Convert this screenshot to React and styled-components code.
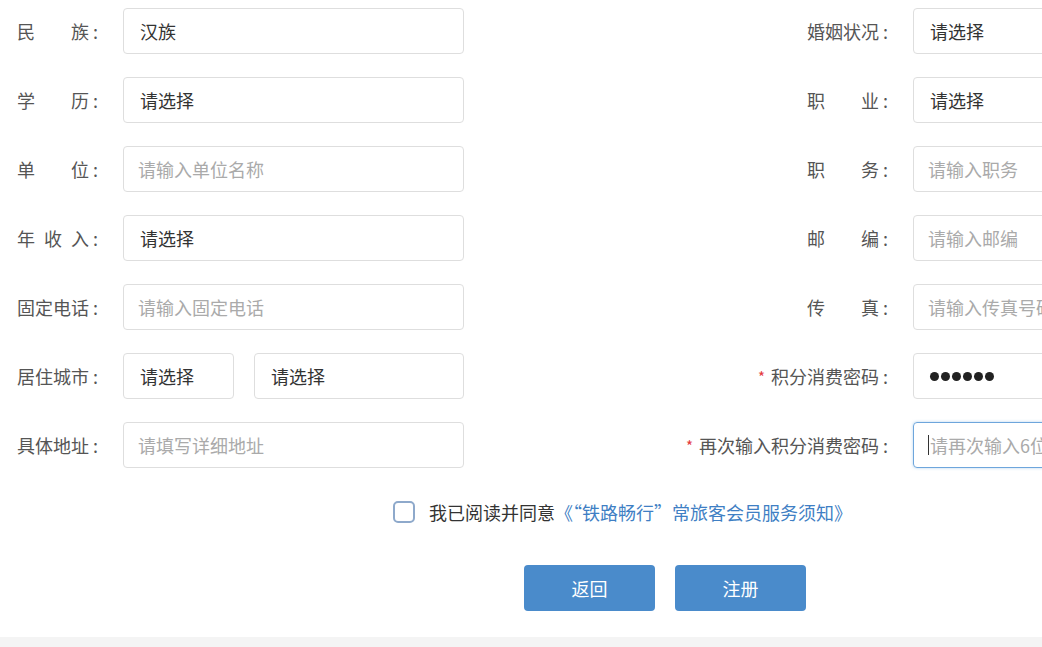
import React from 'react';
import styled, { createGlobalStyle } from 'styled-components';

const Global = createGlobalStyle`
  html, body {
    margin: 0;
    padding: 0;
    background: #fff;
    overflow: hidden;
  }
  body {
    font-family: "Noto Sans CJK SC", "Noto Sans", "Liberation Sans", sans-serif;
  }
`;

const Page = styled.div`
  width: 1254px;
  padding-top: 8px;
  display: flex;
  flex-direction: column;
`;

const Form = styled.div`
  display: flex;
  flex-direction: column;
  gap: 23px;
  padding-left: 17px;
`;

const Row = styled.div`
  display: flex;
  justify-content: space-between;
`;

const Field = styled.div`
  display: flex;
  align-items: center;
  gap: ${p => (p.$right ? '23px' : '25px')};
`;

const Label = styled.div`
  width: ${p => (p.$right ? '210px' : '81px')};
  display: flex;
  justify-content: ${p => (p.$right ? 'flex-end' : 'flex-start')};
  align-items: center;
  font-size: 18px;
  color: #555;
  white-space: nowrap;
  padding-right: ${p => (p.$right ? '2px' : '0')};
`;

const Spread = styled.span`
  display: inline-block;
  width: 72px;
  text-align: justify;
  text-align-last: justify;
`;

const Colon = styled.span`
  margin-left: 4px;
`;

const Star = styled.span`
  color: #e4393c;
  font-size: 15px;
  margin-right: 6px;
`;

const Inputs = styled.div`
  display: flex;
  gap: 20px;
`;

const Box = styled.div`
  box-sizing: border-box;
  width: ${p => p.$w || 341}px;
  height: 46px;
  border: 1px solid ${p => (p.$focus ? '#6ea6dc' : '#dedede')};
  box-shadow: ${p => (p.$focus ? '0 0 3px rgba(102,166,220,0.5)' : 'none')};
  border-radius: 4px;
  display: flex;
  align-items: center;
  padding-left: ${p => (p.$placeholder ? 14 : 16)}px;
  font-size: 18px;
  color: ${p => (p.$placeholder ? '#aaa' : '#333')};
  white-space: nowrap;
  overflow: hidden;
`;

const Caret = styled.span`
  display: inline-block;
  width: 1px;
  height: 20px;
  background: #333;
  margin-right: 1px;
`;

const Dots = styled.div`
  display: flex;
  gap: 2px;
`;

const Dot = styled.span`
  width: 9px;
  height: 9px;
  border-radius: 50%;
  background: #222;
`;

const Agree = styled.div`
  margin-top: 31px;
  padding-left: 393px;
  display: flex;
  align-items: center;
  gap: 14px;
  font-size: 18px;
  color: #333;
`;

const Check = styled.span`
  box-sizing: border-box;
  width: 22px;
  height: 22px;
  border: 2px solid #8ea9cb;
  border-radius: 5px;
`;

const Link = styled.span`
  color: #3f7fc4;
`;

const Buttons = styled.div`
  margin-top: 40px;
  padding-left: 524px;
  display: flex;
  gap: 20px;
`;

const Button = styled.div`
  width: 131px;
  height: 46px;
  border-radius: 4px;
  background: #4a8bcb;
  color: #fff;
  font-size: 18px;
  display: flex;
  align-items: center;
  justify-content: center;
`;

const Footer = styled.div`
  margin-top: 26px;
  height: 20px;
  background: #f4f4f4;
`;

function Lbl({ text, spread, right, star }) {
  return (
    <Label $right={right}>
      {star && <Star>*</Star>}
      {spread ? <Spread>{text}</Spread> : <span>{text}</span>}
      <Colon>:</Colon>
    </Label>
  );
}

export default function App() {
  return (
    <Page>
      <Global />
      <Form>
        <Row>
          <Field>
            <Lbl text="民族" spread />
            <Box>汉族</Box>
          </Field>
          <Field $right>
            <Lbl text="婚姻状况" right />
            <Box>请选择</Box>
          </Field>
        </Row>
        <Row>
          <Field>
            <Lbl text="学历" spread />
            <Box>请选择</Box>
          </Field>
          <Field $right>
            <Lbl text="职业" spread right />
            <Box>请选择</Box>
          </Field>
        </Row>
        <Row>
          <Field>
            <Lbl text="单位" spread />
            <Box $placeholder>请输入单位名称</Box>
          </Field>
          <Field $right>
            <Lbl text="职务" spread right />
            <Box $placeholder>请输入职务</Box>
          </Field>
        </Row>
        <Row>
          <Field>
            <Lbl text="年收入" spread />
            <Box>请选择</Box>
          </Field>
          <Field $right>
            <Lbl text="邮编" spread right />
            <Box $placeholder>请输入邮编</Box>
          </Field>
        </Row>
        <Row>
          <Field>
            <Lbl text="固定电话" />
            <Box $placeholder>请输入固定电话</Box>
          </Field>
          <Field $right>
            <Lbl text="传真" spread right />
            <Box $placeholder>请输入传真号码</Box>
          </Field>
        </Row>
        <Row>
          <Field>
            <Lbl text="居住城市" />
            <Inputs>
              <Box $w={111}>请选择</Box>
              <Box $w={210}>请选择</Box>
            </Inputs>
          </Field>
          <Field $right>
            <Lbl text="积分消费密码" right star />
            <Box>
              <Dots>
                {[0, 1, 2, 3, 4, 5].map(i => <Dot key={i} />)}
              </Dots>
            </Box>
          </Field>
        </Row>
        <Row>
          <Field>
            <Lbl text="具体地址" />
            <Box $placeholder>请填写详细地址</Box>
          </Field>
          <Field $right>
            <Lbl text="再次输入积分消费密码" right star />
            <Box $placeholder $focus>
              <Caret />
              请再次输入6位积分消费密码
            </Box>
          </Field>
        </Row>
      </Form>
      <Agree>
        <Check />
        <span>
          我已阅读并同意<Link>《“铁路畅行”常旅客会员服务须知》</Link>
        </span>
      </Agree>
      <Buttons>
        <Button>返回</Button>
        <Button>注册</Button>
      </Buttons>
      <Footer />
    </Page>
  );
}
